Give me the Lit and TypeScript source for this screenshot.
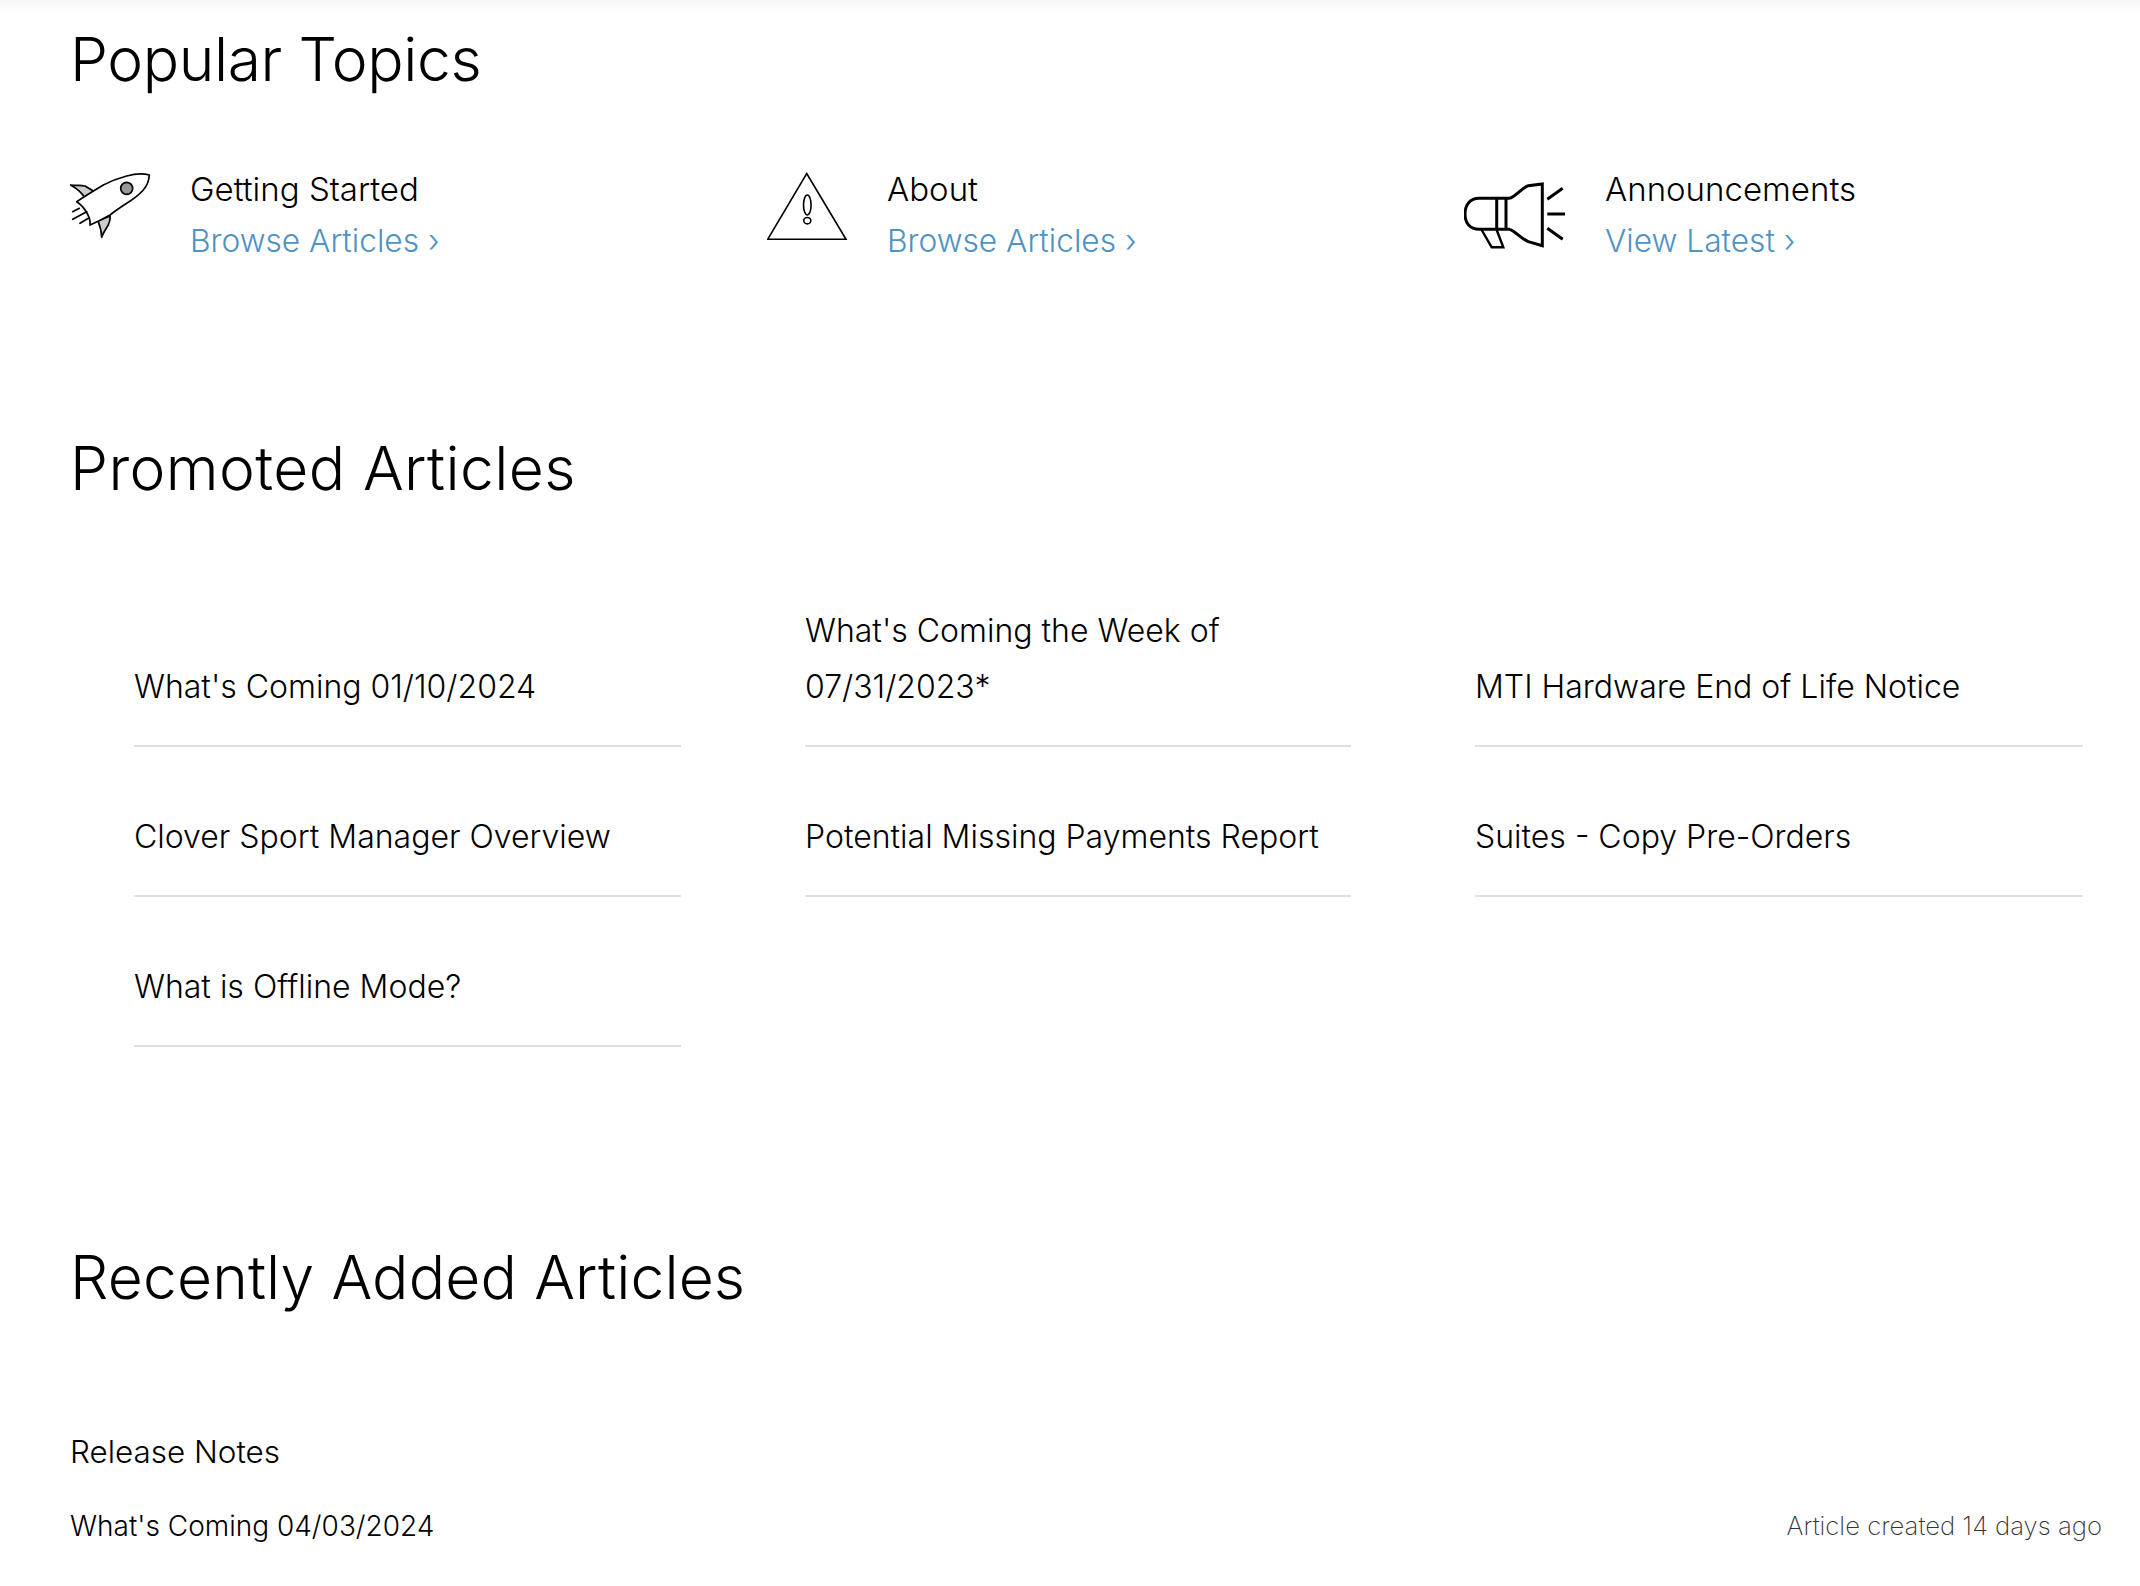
import { LitElement, html, css } from "lit";
import { customElement } from "lit/decorators.js";

const rocket = html`<svg class="ic" width="120" height="90" viewBox="0 0 120 90" fill="none" stroke="#000" stroke-width="1.7" stroke-linejoin="round" stroke-linecap="round">
  <path fill="#ccc" d="M0.5 22 C6 22.5 11 22.5 15 23 L25 29 L15 35 C12 30 6 25 0.5 22Z"/>
  <path fill="#ccc" d="M28 58 L40 53 C40.5 56 39.5 59 38.3 62 C36 66 33 70 31.7 74.3 C31.5 68 30 63 28 58Z"/>
  <path fill="#fff" d="M6.7 38.7 C15 33 25 27 33.3 22 C41 18 49 15 56.7 13 C64 11 72 10 79.3 12 C79 18 76 24 73.3 27 C68 33 62 37 56.7 40.3 C51 44 45 48 40 52 C33 56 27 59 20 62 C21 55 15 44 6.7 38.7Z"/>
  <circle cx="56.7" cy="25.3" r="6" fill="#999"/>
  <path d="M2.7 48.7 L9.3 45.3 M2.7 56.3 L16.7 48.7 M10 60.3 L18.3 55.3"/>
</svg>`;
const warn = html`<svg class="ic" width="120" height="90" viewBox="0 0 120 90" fill="none" stroke="#000" stroke-width="1.6" stroke-linejoin="miter">
  <path d="M39.7 10.5 L79 76.3 L0.7 76.3 Z"/>
  <ellipse cx="40.3" cy="42" rx="3.8" ry="10"/>
  <ellipse cx="40.3" cy="57.7" rx="3.5" ry="3.2"/>
</svg>`;
const horn = html`<svg class="ic" width="141" height="90" viewBox="0 0 141 90" fill="none" stroke="#000" stroke-width="3" stroke-linejoin="miter">
  <path d="M46 35.3 H15 C6 35.3 1 42 1 51 C1 60 6 66.3 15 66.3 H46"/>
  <path d="M32.7 35.3 V66.3 M42 35.3 V66.3"/>
  <path d="M46 35.3 C52 33 58 25 64.3 22.7 L78.3 21 V82.7 L64.3 78.7 C58 76 52 69 46 66.3"/>
  <path d="M17.7 67 L27.7 84.3 H39.3 L32.7 67" stroke-width="2.4"/>
  <path d="M83.3 36.3 L98.7 25.3 M83.3 51 H101 M83.3 65.3 L98.7 76.3"/>
</svg>`;

const topics = [
  { icon: rocket, title: "Getting Started", link: "Browse Articles ›" },
  { icon: warn, title: "About", link: "Browse Articles ›" },
  { icon: horn, title: "Announcements", link: "View Latest ›" },
];
const promoted = [
  "What's Coming 01/10/2024",
  "What's Coming the Week of 07/31/2023*",
  "MTI Hardware End of Life Notice",
  "Clover Sport Manager Overview",
  "Potential Missing Payments Report",
  "Suites - Copy Pre-Orders",
  "What is Offline Mode?",
];

@customElement("app-root")
export class AppRoot extends LitElement {
  static styles = css`
    :host { display: block; width: 2140px; height: 1586px; overflow: hidden; background: #fff; color: #000;
      font-family: Inter, "Liberation Sans", sans-serif; font-weight: 350; }
    .page { padding: 24px 38px 0 70px; position: relative; }
    .shade { position: absolute; left: 0; right: 0; top: 0; height: 14px; background: linear-gradient(#f4f6f9, #fff); }
    h2 { margin: 0; font-size: 60.5px; line-height: 72px; font-weight: 350; letter-spacing: 0.15px; }
    h2.popular { letter-spacing: -0.4px; margin-top: -1px; margin-bottom: 1px; }
    .topics { display: grid; grid-template-columns: repeat(3, 697px); margin-top: 68px; }
    .topic { display: flex; height: 104px; }
    .ic { flex: none; }
    .t { font-size: 33px; line-height: 52px; }
    a { display: block; font-size: 31.7px; line-height: 52px; color: #4f92c4; text-decoration: none; font-weight: 300; }
    h2.promo { margin-top: 165px; letter-spacing: 0.4px; }
    .grid { display: grid; grid-template-columns: 547px 546px 608px; column-gap: 124px; margin: 93px 0 0 64px; }
    .art { display: flex; align-items: flex-end; padding-bottom: 30px; border-bottom: 2px solid #e0e0e0; font-size: 32px; line-height: 56px; box-sizing: border-box; height: 150px; }
    h2.recent { margin-top: 194px; }
    .rel { margin-top: 119px; font-size: 31.4px; line-height: 40px; }
    .row { display: flex; justify-content: space-between; align-items: center; margin-top: 34px; font-size: 28px; line-height: 40px; }
    .row span.ago { font-size: 25.7px; font-weight: 200; color: #333; }
  `;
  render() {
    return html`<div class="page">
      <div class="shade"></div>
      <h2 class="popular">Popular Topics</h2>
      <div class="topics">
        ${topics.map((t) => html`<div class="topic">${t.icon}<div><div class="t">${t.title}</div><a>${t.link}</a></div></div>`)}
      </div>
      <h2 class="promo">Promoted Articles</h2>
      <div class="grid">
        ${promoted.map((p) => html`<div class="art"><span>${p}</span></div>`)}
      </div>
      <h2 class="recent">Recently Added Articles</h2>
      <div class="rel">Release Notes</div>
      <div class="row"><span>What's Coming 04/03/2024</span><span class="ago">Article created 14 days ago</span></div>
    </div>`;
  }
}
